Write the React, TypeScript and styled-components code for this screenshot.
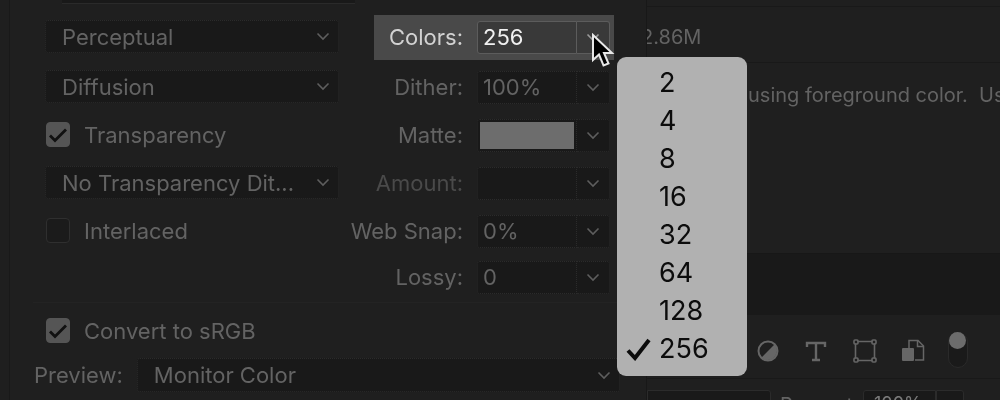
import React from 'react';
import styled, { createGlobalStyle } from 'styled-components';

const GlobalStyle = createGlobalStyle`
  html, body {
    margin: 0;
    padding: 0;
    background: #1f1f1f;
  }
  * {
    box-sizing: border-box;
  }
`;

const Page = styled.div`
  position: relative;
  width: 1000px;
  height: 400px;
  display: flex;
  overflow: hidden;
  background: #1f1f1f;
  font-family: Inter, 'Liberation Sans', sans-serif;
  font-size: 22px;
  color: #636363;
  filter: blur(0.45px);
`;

/* left side: optimize settings */
const SettingsPanel = styled.section`
  width: 638px;
  flex: none;
  margin-left: 9px;
  border-left: 1px solid #191919;
  border-right: 1px solid #181818;
  display: flex;
  flex-direction: column;
`;

const TopStub = styled.div`
  width: 293px;
  height: 4px;
  margin-left: 52px;
  background: #191919;
  border-bottom: 1px solid #2a2a2a;
`;

const Columns = styled.div`
  height: 299px;
  margin-left: 23px;
  padding-left: 12px;
  display: flex;
  border-bottom: 1px solid #232323;
`;

const LeftColumn = styled.div`
  width: 294px;
  flex: none;
  padding-top: 16px;
  display: flex;
  flex-direction: column;
`;

const RightColumn = styled.div`
  width: 275px;
  flex: none;
  display: flex;
  flex-direction: column;
  align-items: stretch;
`;

const Select = styled.div<{ $gap: number }>`
  height: 33px;
  margin-bottom: ${({ $gap }) => $gap}px;
  padding: 0 8px 0 16px;
  display: flex;
  align-items: center;
  justify-content: space-between;
  background: #191919;
  border: 1px dotted #2b2b2b;
  border-radius: 3px;
  white-space: nowrap;
`;

const CheckRow = styled.label<{ $gap: number }>`
  height: 25px;
  margin-bottom: ${({ $gap }) => $gap}px;
  display: flex;
  align-items: center;
  gap: 14px;
`;

const CheckBox = styled.span<{ $checked?: boolean }>`
  width: 24px;
  height: 25px;
  margin-left: 1px;
  display: grid;
  place-items: center;
  border-radius: 4px;
  background: ${({ $checked }) => ($checked ? '#555555' : '#1b1b1b')};
  border: 1px solid ${({ $checked }) => ($checked ? '#555555' : '#2f2f2f')};
`;

const FieldRow = styled.div<{ $top: number; $active?: boolean }>`
  height: ${({ $active }) => ($active ? 45 : 33)}px;
  margin-top: ${({ $top }) => $top}px;
  margin-left: 35px;
  margin-right: ${({ $active }) => ($active ? 0 : 4)}px;
  padding-right: ${({ $active }) => ($active ? 4 : 0)}px;
  display: flex;
  align-items: center;
  justify-content: flex-end;
  background: ${({ $active }) => ($active ? '#494949' : 'transparent')};
  color: ${({ $active }) => ($active ? '#d2d2d2' : 'inherit')};
`;

const FieldLabel = styled.span<{ $dim?: boolean }>`
  margin: 0 14px 2px 0;
  white-space: nowrap;
  color: ${({ $dim }) => ($dim ? '#4a4a4a' : 'inherit')};
`;

const FieldValue = styled.div<{ $active?: boolean }>`
  width: 100px;
  flex: none;
  height: 33px;
  padding: 0 0 2px 5px;
  display: flex;
  align-items: center;
  background: ${({ $active }) => ($active ? '#393939' : '#191919')};
  border: 1px ${({ $active }) => ($active ? 'solid #5c5c5c' : 'dotted #2b2b2b')};
  border-radius: 3px 0 0 3px;
  color: ${({ $active }) => ($active ? '#f0f0f0' : 'inherit')};
`;

const Swatch = styled.div`
  width: 100px;
  flex: none;
  height: 33px;
  padding: 2px;
  background: #191919;
  border: 1px dotted #2b2b2b;
  border-radius: 3px 0 0 3px;
  &::after {
    content: '';
    display: block;
    height: 100%;
    background: #6d6d6d;
  }
`;

const ArrowBox = styled.div<{ $active?: boolean }>`
  width: 33px;
  flex: none;
  height: 33px;
  display: grid;
  place-items: center;
  background: ${({ $active }) => ($active ? '#393939' : '#191919')};
  border: 1px ${({ $active }) => ($active ? 'solid #5c5c5c' : 'dotted #2b2b2b')};
  border-left: none;
  border-radius: 0 3px 3px 0;
`;

const ConvertRow = styled.div`
  margin-top: 15px;
  margin-left: 35px;
`;

const PreviewRow = styled.div`
  height: 34px;
  margin-top: 15px;
  margin-left: 24px;
  display: flex;
  align-items: center;
  gap: 14px;
`;

const PreviewSelect = styled(Select)`
  width: 483px;
  height: 34px;
  margin: 0;
`;

/* right side: image info and toolbar */
const InfoPane = styled.section`
  flex: 1;
  min-width: 0;
  overflow: hidden;
  display: flex;
  flex-direction: column;
  font-size: 20px;
  & > * {
    flex: none;
  }
`;

const InfoRow = styled.div`
  height: 57px;
  margin-top: 6px;
  padding-top: 4px;
  display: flex;
  align-items: center;
  border-top: 1px solid #191919;
  border-bottom: 1px solid #191919;
  white-space: nowrap;
`;

const SizeText = styled.span`
  margin-left: -6px;
`;

const Hint = styled.p`
  height: 190px;
  margin: 0;
  padding: 20px 0 0 101px;
  white-space: pre;
`;

const DarkBand = styled.div`
  height: 62px;
  background: #191919;
  border-top: 1px solid #171717;
`;

const Toolbar = styled.div`
  height: 64px;
  padding-left: 109px;
  display: flex;
  align-items: center;
  border-bottom: 1px solid #191919;
`;

const ToolIcon = styled.svg<{ $gap: number }>`
  width: 24px;
  height: 24px;
  flex: none;
  margin-right: ${({ $gap }) => $gap}px;
  margin-top: 9px;
`;

const Toggle = styled.div`
  width: 20px;
  height: 36px;
  margin-top: 6px;
  border-radius: 10px;
  background: #1a1a1a;
  border: 1px solid #2a2a2a;
  position: relative;
  &::before {
    content: '';
    position: absolute;
    top: -1px;
    left: 0;
    width: 17px;
    height: 17px;
    border-radius: 50%;
    background: #6c6c6c;
  }
`;

const BottomRow = styled.div`
  margin-top: 11px;
  display: flex;
  align-items: flex-start;
  font-size: 18px;
`;

const BottomBox = styled.div<{ $width: number; $radius?: string }>`
  width: ${({ $width }) => $width}px;
  flex: none;
  height: 40px;
  padding: 2px 0 0 10px;
  background: #191919;
  border: 1px solid #2b2b2b;
  border-radius: ${({ $radius }) => $radius ?? '3px'};
  color: #7a7a7a;
`;

const BottomLabel = styled.span`
  width: 92px;
  flex: none;
  padding: 3px 0 0 9px;
  font-size: 20px;
`;

/* colours popup, lies over everything */
const Menu = styled.ul`
  position: absolute;
  left: 617px;
  top: 57px;
  width: 130px;
  height: 319px;
  margin: 0;
  padding: 7px 0 0 42px;
  list-style: none;
  background: #b1b1b1;
  border-radius: 9px;
  color: #0c0c0c;
  font-size: 27px;
`;

const MenuItem = styled.li`
  position: relative;
  height: 38px;
  line-height: 38px;
`;

const MenuCheck = styled.svg`
  position: absolute;
  left: -33px;
  top: 8px;
  width: 25px;
  height: 23px;
`;

const Cursor = styled.svg`
  position: absolute;
  left: 590px;
  top: 33px;
  width: 26px;
  height: 36px;
`;

function Chevron({ color = '#5e5e5e' }: { color?: string }): JSX.Element {
  return (
    <svg width="14" height="9" viewBox="0 0 14 9" fill="none">
      <path d="M1.5 1.5 7 7l5.5-5.5" stroke={color} strokeWidth="1.6" />
    </svg>
  );
}

function Tick(): JSX.Element {
  return (
    <svg width="20" height="16" viewBox="0 0 20 16" fill="none">
      <path d="M2 8.5l5 5L18 2.5" stroke="#111111" strokeWidth="2.8" />
    </svg>
  );
}

const fields = [
  { label: 'Dither:', value: '100%', top: 11 },
  { label: 'Matte:', top: 15, swatch: true },
  { label: 'Amount:', value: '', top: 15, dim: true },
  { label: 'Web Snap:', value: '0%', top: 15 },
  { label: 'Lossy:', value: '0', top: 13 },
];

const sizes = ['2', '4', '8', '16', '32', '64', '128', '256'];

function App(): JSX.Element {
  return (
    <Page>
      <GlobalStyle />
      <SettingsPanel>
        <TopStub />
        <Columns>
          <LeftColumn>
            <Select $gap={17}>
              Perceptual
              <Chevron />
            </Select>
            <Select $gap={19}>
              Diffusion
              <Chevron />
            </Select>
            <CheckRow $gap={19}>
              <CheckBox $checked>
                <Tick />
              </CheckBox>
              Transparency
            </CheckRow>
            <Select $gap={19}>
              No Transparency Dit...
              <Chevron />
            </Select>
            <CheckRow $gap={0}>
              <CheckBox />
              Interlaced
            </CheckRow>
          </LeftColumn>
          <RightColumn>
            <FieldRow $top={11} $active>
              <FieldLabel>Colors:</FieldLabel>
              <FieldValue $active>256</FieldValue>
              <ArrowBox $active>
                <Chevron color="#9a9a9a" />
              </ArrowBox>
            </FieldRow>
            {fields.map((field) => (
              <FieldRow key={field.label} $top={field.top}>
                <FieldLabel $dim={field.dim}>{field.label}</FieldLabel>
                {field.swatch ? <Swatch /> : <FieldValue>{field.value}</FieldValue>}
                <ArrowBox>
                  <Chevron />
                </ArrowBox>
              </FieldRow>
            ))}
          </RightColumn>
        </Columns>
        <ConvertRow>
          <CheckRow $gap={0}>
            <CheckBox $checked>
              <Tick />
            </CheckBox>
            Convert to sRGB
          </CheckRow>
        </ConvertRow>
        <PreviewRow>
          Preview:
          <PreviewSelect $gap={0}>
            Monitor Color
            <Chevron />
          </PreviewSelect>
        </PreviewRow>
      </SettingsPanel>

      <InfoPane>
        <InfoRow>
          <SizeText>2.86M</SizeText>
        </InfoRow>
        <Hint>using foreground color.  Use</Hint>
        <DarkBand />
        <Toolbar>
          <ToolIcon $gap={24} viewBox="0 0 24 24" fill="none">
            <circle cx="12" cy="12" r="9.5" stroke="#666666" strokeWidth="2" />
            <path d="M18.7 5.3a9.5 9.5 0 0 1-13.4 13.4z" fill="#666666" />
          </ToolIcon>
          <ToolIcon $gap={25} viewBox="0 0 24 24" fill="none" stroke="#666666" strokeWidth="2.4">
            <path d="M3 8V4h18v4M12 4v17M8 21h8" />
          </ToolIcon>
          <ToolIcon $gap={24} viewBox="0 0 24 24" fill="none" stroke="#666666" strokeWidth="1.6">
            <path d="M4.5 2.5h15M4.5 21.5h15M2.5 4.5v15M21.5 4.5v15" />
            <rect x="1" y="1" width="4" height="4" rx="1" />
            <rect x="19" y="1" width="4" height="4" rx="1" />
            <rect x="1" y="19" width="4" height="4" rx="1" />
            <rect x="19" y="19" width="4" height="4" rx="1" />
          </ToolIcon>
          <ToolIcon $gap={23} viewBox="0 0 24 24" fill="none">
            <path d="M8 9V1.5h9l5.5 5.5v14H14" stroke="#666666" strokeWidth="1.5" />
            <path d="M16.5 1.5V7.5h6" stroke="#666666" strokeWidth="1.5" />
            <rect x="1" y="9" width="12" height="13" rx="1" fill="#666666" />
          </ToolIcon>
          <Toggle />
        </Toolbar>
        <BottomRow>
          <BottomBox $width={124} $radius="0 3px 3px 0" />
          <BottomLabel>Percent:</BottomLabel>
          <BottomBox $width={73} $radius="3px 0 0 3px">
            100%
          </BottomBox>
          <BottomBox $width={28} $radius="0 3px 3px 0" />
        </BottomRow>
      </InfoPane>

      <Menu>
        {sizes.map((size) => (
          <MenuItem key={size}>
            {size === '256' && (
              <MenuCheck viewBox="0 0 25 23" fill="none">
                <path d="M2 12.5 9 20 23 2" stroke="#0c0c0c" strokeWidth="4" />
              </MenuCheck>
            )}
            {size}
          </MenuItem>
        ))}
      </Menu>

      <Cursor viewBox="0 0 26 36">
        <path
          d="M3 2v25l6-5.5 4.5 11 5-2L14 20h8z"
          fill="#000000"
          stroke="#e8e8e8"
          strokeWidth="2"
        />
      </Cursor>
    </Page>
  );
}

export default App;
